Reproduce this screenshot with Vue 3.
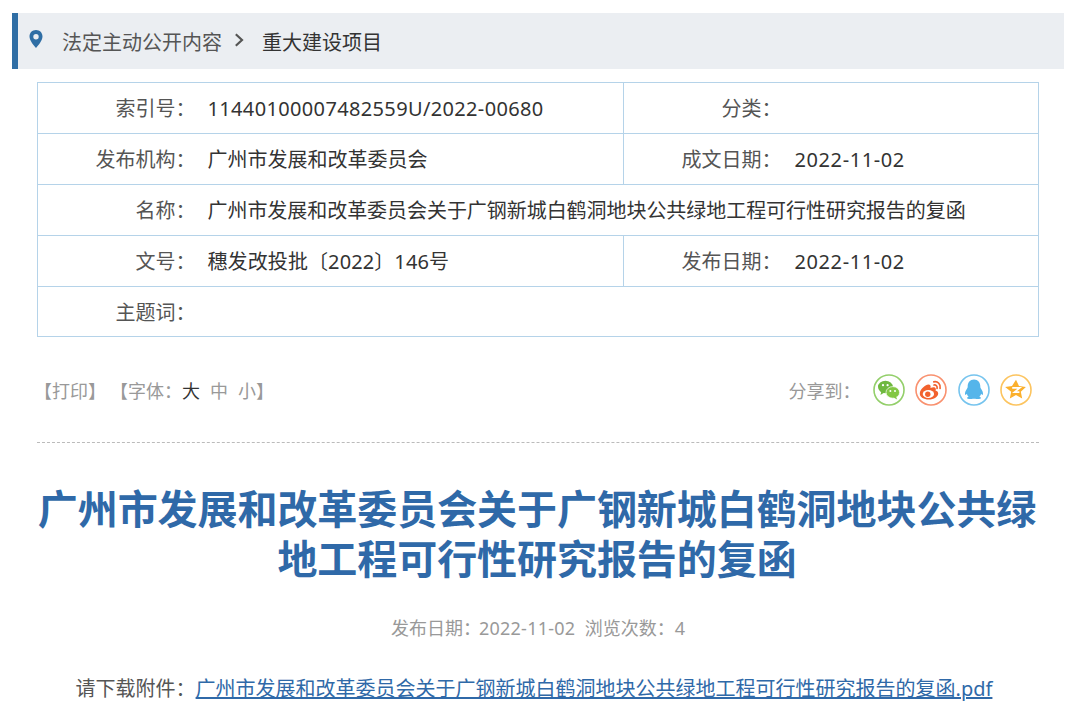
<script setup>
const rows = [
  { label: '索引号：', value: '11440100007482559U/2022-00680', cls: 'num-long', label2: '分类：', value2: '' },
  { label: '发布机构：', value: '广州市发展和改革委员会', label2: '成文日期：', value2: '2022-11-02' },
  { label: '名称：', value: '广州市发展和改革委员会关于广钢新城白鹤洞地块公共绿地工程可行性研究报告的复函', cls: 'name' },
  { label: '文号：', value: '穗发改投批〔2022〕146号', cls: 'num-short', label2: '发布日期：', value2: '2022-11-02' },
  { label: '主题词：', value: '' }
]
</script>

<template>
  <div class="page">
    <div class="crumb">
      <svg class="pin" viewBox="0 0 16 20" width="16" height="20">
        <path fill="#2f6ea5" fill-rule="evenodd" d="M8 1C4.200 1 1.500 3.800 1.500 7.400 1.500 11.600 6 16.400 8 19c2-2.600 6.500-7.400 6.500-11.600C14.500 3.800 11.800 1 8 1zm0 4a2.700 2.700 0 1 1 0 5.400A2.700 2.700 0 0 1 8 5z"/>
      </svg>
      <span class="crumb-a">法定主动公开内容</span>
      <svg class="chev" viewBox="0 0 10 14" width="10" height="14">
        <path d="M1.800 1.200 8 7l-6.200 5.800" fill="none" stroke="#555" stroke-width="2.200"/>
      </svg>
      <span class="crumb-b">重大建设项目</span>
    </div>

    <table class="info">
      <colgroup>
        <col class="c1" /><col class="c2" /><col class="c3" /><col />
      </colgroup>
      <tbody>
        <tr v-for="r in rows" :key="r.label">
          <td class="lab">{{ r.label }}</td>
          <td class="val" :class="r.cls" :colspan="r.label2 ? 1 : 3">{{ r.value }}</td>
          <template v-if="r.label2">
            <td class="lab lab2">{{ r.label2 }}</td>
            <td class="val val2 date">{{ r.value2 }}</td>
          </template>
        </tr>
      </tbody>
    </table>

    <div class="tools">
      <div class="tools-left">
        <span>【打印】</span>
        <span class="font-label">【字体：</span><span class="big">大</span><span class="sz">中</span><span class="sz">小】</span>
      </div>
      <div class="share">
        <span class="share-label">分享到：</span>
        <svg class="ic" viewBox="0 0 32 32" width="32" height="32">
          <circle cx="16" cy="16" r="15" fill="#fff" stroke="#93cf6a" stroke-width="1.600"/>
          <ellipse cx="12.400" cy="13" rx="7.400" ry="6.200" fill="#6fb83f"/>
          <path d="M8.500 17 7.400 21l4-2.400z" fill="#6fb83f"/>
          <ellipse cx="19.800" cy="18.400" rx="6.800" ry="5.800" fill="#83c744" stroke="#fff" stroke-width=".7"/>
          <path d="M23 22.500l1.200 2.900-3.800-1.800z" fill="#83c744"/>
          <circle cx="10" cy="11.200" r="1.100" fill="#fff"/><circle cx="14.600" cy="11.200" r="1.100" fill="#fff"/>
          <circle cx="17.400" cy="17" r="1" fill="#fff"/><circle cx="22" cy="17" r="1" fill="#fff"/>
        </svg>
        <svg class="ic" viewBox="0 0 32 32" width="32" height="32">
          <circle cx="16" cy="16" r="15" fill="#fff" stroke="#f9916f" stroke-width="1.600"/>
          <path d="M13.800 25.500c-5 0-9-2.500-9-5.800 0-3.800 5.100-9.100 8.700-9.100 1.900 0 2.500 1.400 2 3.300 2.600-1.100 5.300-1 5.300 1.100.1.500 0 1.100-.3 1.500 1.600.400 2.700 1.400 2.700 3 0 3.300-4.200 6-9.400 6z" fill="#f2622e"/>
          <ellipse cx="13.400" cy="20" rx="5.700" ry="4" fill="#fff"/>
          <circle cx="12.800" cy="20.200" r="2.700" fill="#f2622e"/>
          <path d="M18.800 7.800c4-.8 7.200 2.400 6.300 6.600M19 11c2-.3 3.500 1.200 3.100 3.300" fill="none" stroke="#f2622e" stroke-width="1.700" stroke-linecap="round"/>
        </svg>
        <svg class="ic" viewBox="0 0 32 32" width="32" height="32">
          <circle cx="16" cy="16" r="15" fill="#fff" stroke="#76c4ee" stroke-width="1.600"/>
          <path d="M16 5.500c-4 0-6.300 3-6.300 6.800 0 1.100-.2 1.700-.9 2.700-1.300 2-2.100 3.800-1.700 5.500.2.900 1.100.4 1.800-.7.200 1.200.9 2.200 1.700 2.900-1.100.4-1.800 1-1.600 1.600.3.800 2.600.9 4.600.7.900-.1 1.500-.3 2.400-.3s1.500.2 2.400.3c2 .2 4.300.1 4.600-.7.200-.6-.5-1.200-1.600-1.600.8-.7 1.500-1.700 1.700-2.900.7 1.100 1.600 1.600 1.800.7.400-1.700-.4-3.500-1.700-5.500-.7-1-.9-1.600-.9-2.700 0-3.800-2.300-6.800-6.300-6.800z" fill="#55b5ea"/>
        </svg>
        <svg class="ic" viewBox="0 0 32 32" width="32" height="32">
          <circle cx="16" cy="16" r="15" fill="#fff" stroke="#fcc45f" stroke-width="1.600"/>
          <path d="M16 5.800l3 6.300 6.900.9-5.100 4.700 1.400 6.900-6.200-3.500-6.200 3.500 1.400-6.900L5.100 13l6.900-.9z" fill="#fbb02d"/>
          <path d="M12.200 13.800h7.600l-5.400 4.400h5" fill="none" stroke="#fff" stroke-width="1.700"/>
        </svg>
      </div>
    </div>

    <div class="divider"></div>

    <h1 class="title">广州市发展和改革委员会关于广钢新城白鹤洞地块公共绿<br />地工程可行性研究报告的复函</h1>

    <div class="meta">发布日期：<span class="meta-date">2022-11-02</span>&nbsp;&nbsp;浏览次数：4</div>

    <p class="attach">请下载附件：<a class="link">广州市发展和改革委员会关于广钢新城白鹤洞地块公共绿地工程可行性研究报告的复函.pdf</a></p>
  </div>
</template>

<style>
html, body { margin: 0; background: #fff; }
</style>

<style scoped>
.page {
  width: 1080px;
  height: 728px;
  overflow: hidden;
  padding-top: 13px;
  box-sizing: border-box;
  font-family: "Noto Sans", "Noto Sans CJK SC", sans-serif;
  font-size: 20px;
  color: #333;
}
.crumb {
  display: flex;
  align-items: center;
  height: 56px;
  margin: 0 16px 0 12px;
  background: #ebeef2;
  border-left: 6px solid #2f6ea5;
  padding-left: 10px;
}
.pin { margin-right: 18px; margin-top: -4px; }
.crumb-a { color: #555; }
.chev { margin: 0 18px 0 12px; margin-top: -2px; }
.crumb-b { color: #333; }
.info {
  width: 1002px;
  margin: 13px 0 0 37px;
  border-collapse: collapse;
  table-layout: fixed;
  border: 1px solid #b5d3e9;
}
.c1 { width: 158px; }
.c2 { width: 428px; }
.c3 { width: 158px; }
.info td {
  border-top: 1px solid #b5d3e9;
  height: 51px;
  padding: 2px 0 0;
  box-sizing: border-box;
  line-height: 28px;
}
.info tr:last-child td { height: 50px; }
.info .lab { text-align: right; color: #555; }
.info .lab2 { border-left: 1px solid #b5d3e9; }
.info .val { padding-left: 12px; white-space: nowrap; }
.info .val2 { padding-left: 13px; }
.num-long { letter-spacing: .35px; }
.num-short { letter-spacing: .1px; }
.name { letter-spacing: -.05px; }
.date { letter-spacing: .6px; }
.tools {
  display: flex;
  justify-content: space-between;
  align-items: center;
  height: 105px;
  margin: 0 48px 0 34px;
  font-size: 18px;
  color: #999;
}
.tools-left { display: flex; align-items: center; }
.font-label { margin-left: 4px; }
.big { color: #333; }
.sz { margin-left: 10px; }
.share { display: flex; align-items: center; }
.share-label { margin-right: 1.500px; }
.ic { margin-left: 10.500px; }
.divider {
  margin: 0 41px 0 37px;
  border-top: 1px dashed #bbb;
}
.title {
  width: 1002px;
  margin: 41px 0 0 36px;
  text-align: center;
  font-size: 40px;
  line-height: 50px;
  font-weight: 700;
  letter-spacing: -.06px;
  color: #2f69a8;
}
.meta {
  width: 1002px;
  margin: 29px 0 0 37px;
  text-align: center;
  font-size: 18px;
  line-height: 30px;
  color: #999;
}
.meta-date { margin-left: -2px; letter-spacing: .25px; }
.attach {
  margin: 31px 12px 0 0;
  text-align: center;
  line-height: 30px;
  color: #555;
}
.link { color: #2f69a8; text-decoration: underline; }
</style>
